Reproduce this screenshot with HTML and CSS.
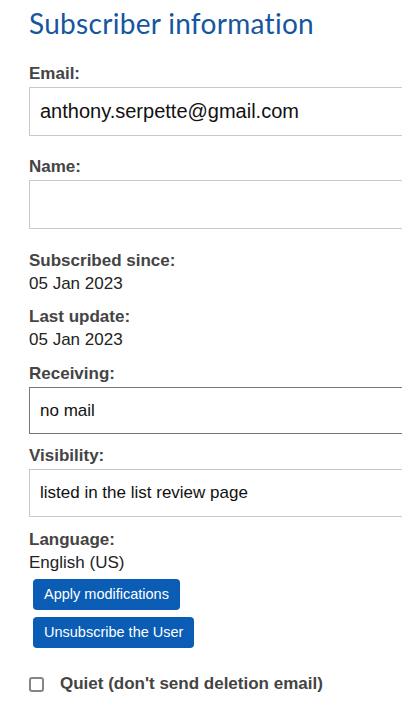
FILE: index.html
```html
<!DOCTYPE html>
<html lang="en">
<head>
<meta charset="utf-8">
<title>Subscriber information</title>
<link rel="stylesheet" href="styles.css">
</head>
<body>
<div class="page">
  <h1 class="title">Subscriber information</h1>
  <div class="field first">
    <div class="label">Email:</div>
    <div class="input input-email">anthony.serpette@gmail.com</div>
  </div>
  <div class="field f-name">
    <div class="label">Name:</div>
    <div class="input"></div>
  </div>
  <div class="field f-since">
    <div class="label">Subscribed since:</div>
    <div class="value">05 Jan 2023</div>
  </div>
  <div class="field f-last">
    <div class="label">Last update:</div>
    <div class="value">05 Jan 2023</div>
  </div>
  <div class="field f-recv">
    <div class="label">Receiving:</div>
    <div class="select select-dark">no mail</div>
  </div>
  <div class="field f-vis">
    <div class="label">Visibility:</div>
    <div class="select">listed in the list review page</div>
  </div>
  <div class="field f-lang">
    <div class="label">Language:</div>
    <div class="value">English (US)</div>
  </div>
  <div class="buttons">
    <button class="btn">Apply modifications</button>
    <button class="btn">Unsubscribe the User</button>
  </div>
  <label class="check">
    <span class="box"></span>
    <span class="check-text">Quiet (don't send deletion email)</span>
  </label>
</div>
</body>
</html>
```

FILE: styles.css
```css
html, body {
  margin: 0;
  padding: 0;
  background: #ffffff;
  overflow: hidden;
}

.page {
  padding-left: 29px;
  font-family: "Liberation Sans", Arial, sans-serif;
  color: #222222;
  width: 460px;
}

.title {
  margin: 5px 0 0 0;
  font-family: Lato, "Open Sans", sans-serif;
  font-weight: 400;
  font-size: 28px;
  line-height: 36px;
  color: #15569f;
  letter-spacing: 0.3px;
}

.field {
  display: flex;
  flex-direction: column;
  gap: 3px;
}

.first { margin-top: 23px; }
.f-name { margin-top: 21px; }
.f-since { margin-top: 22px; }
.f-last { margin-top: 13px; }
.f-recv { margin-top: 14px; }
.f-vis { margin-top: 12px; }
.f-lang { margin-top: 13px; }

.label {
  font-size: 17px;
  line-height: 20px;
  font-weight: 700;
  color: #444444;
}

.value {
  font-size: 17px;
  line-height: 20px;
  color: #222222;
}

.input {
  box-sizing: border-box;
  height: 49px;
  width: 420px;
  border: 1px solid #c8c8c8;
  display: flex;
  align-items: center;
  padding-left: 10px;
  font-size: 20px;
  color: #111111;
}

.select {
  box-sizing: border-box;
  height: 48px;
  width: 420px;
  border: 1px solid #c8c8c8;
  display: flex;
  align-items: center;
  padding-left: 10px;
  font-size: 17px;
  color: #111111;
}

.select-dark {
  height: 47px;
  border-color: #777777;
}

.buttons {
  margin-top: 6px;
  margin-left: 4px;
  display: flex;
  flex-direction: column;
  align-items: flex-start;
  gap: 7px;
}

.btn {
  height: 31px;
  padding: 0 11px;
  border: none;
  border-radius: 4px;
  background: #0a5cb4;
  color: #ffffff;
  font-family: "Liberation Sans", Arial, sans-serif;
  font-size: 14.5px;
  line-height: 31px;
}

.check {
  margin-top: 26px;
  display: flex;
  align-items: center;
  gap: 16px;
}

.box {
  box-sizing: border-box;
  width: 15px;
  height: 15px;
  border: 2px solid #858585;
  border-radius: 3px;
  background: #ffffff;
}

.check-text {
  font-size: 17px;
  line-height: 20px;
  font-weight: 700;
  color: #444444;
}
```
